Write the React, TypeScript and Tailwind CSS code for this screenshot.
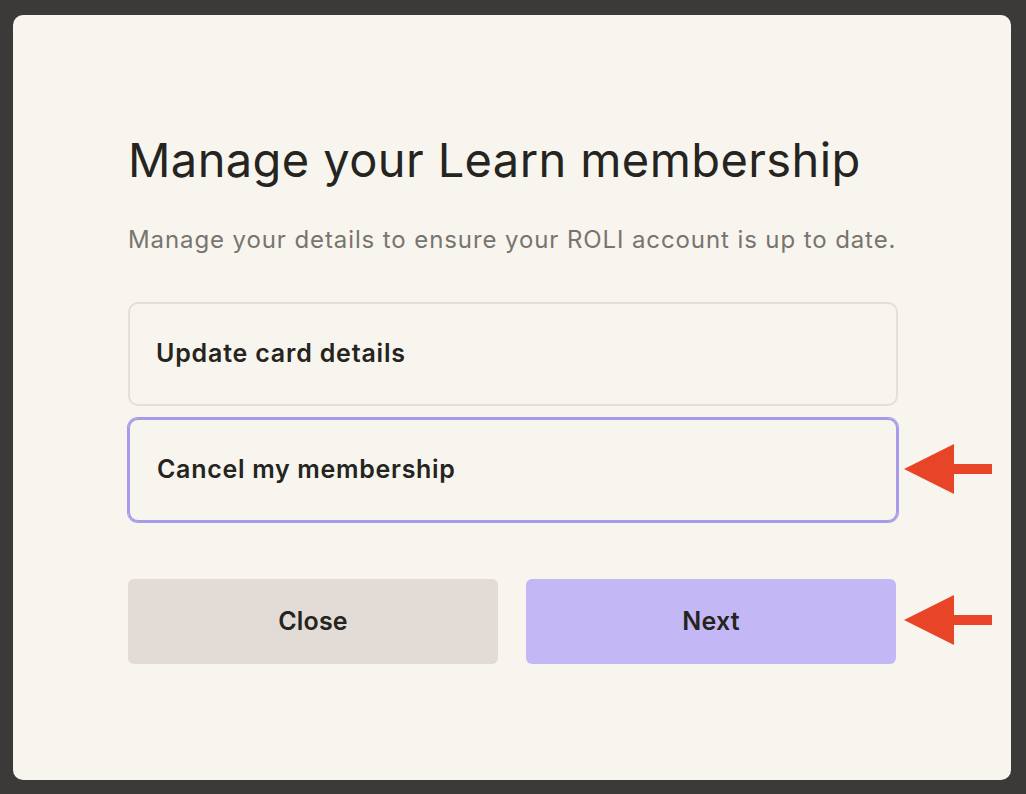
import React from "react";

function Arrow() {
  return (
    <svg width="90" height="50" viewBox="0 0 90 50" className="block">
      <polygon points="0,25 50,0 50,20 88,20 88,30 50,30 50,50" fill="#e84427" />
    </svg>
  );
}

export default function App() {
  return (
    <div
      className="w-[1026px] h-[794px] bg-[#3b3a38] pt-[15px] pl-[13px]"
      style={{ fontFamily: "Inter, 'Noto Sans', sans-serif" }}
    >
      <div className="w-[998px] h-[765px] bg-[#f8f5ee] rounded-[10px] pt-[117px] pl-[115px] relative">
        <div className="w-[770px]">
          <h1 className="text-[47px] leading-[56px] font-normal text-[#252420] tracking-[0.4px]">
            Manage your Learn membership
          </h1>
          <p className="mt-[38px] text-[24px] leading-[28px] text-[#78746f] tracking-[0.9px]">
            Manage your details to ensure your ROLI account is up to date.
          </p>
          <div className="mt-[48px] flex flex-col gap-[12px]">
            <div className="h-[104px] rounded-[10px] border-2 border-[#e4dfd8] flex items-center pl-[26px] text-[25px] font-semibold text-[#252420] tracking-[0.8px]">
              Update card details
            </div>
            <div className="relative h-[104px] rounded-[10px] border-2 border-[#a89be9] ring-1 ring-[#a89be9] flex items-center pl-[27px] text-[25px] font-semibold text-[#252420] tracking-[0.7px]">
              Cancel my membership
              <div className="absolute left-[774px] top-[24px]">
                <Arrow />
              </div>
            </div>
          </div>
          <div className="mt-[57px] flex gap-[28px] w-[768px]">
            <button className="flex-1 h-[85px] rounded-[6px] bg-[#e3dcd6] text-[25px] font-semibold text-[#252420] tracking-[0.2px]">
              Close
            </button>
            <div className="relative flex-1">
              <button className="w-full h-[85px] rounded-[6px] bg-[#c3b8f5] text-[25px] font-semibold text-[#252420] tracking-[0.2px]">
                Next
              </button>
              <div className="absolute left-[378px] top-[16px]">
                <Arrow />
              </div>
            </div>
          </div>
        </div>
      </div>
    </div>
  );
}
